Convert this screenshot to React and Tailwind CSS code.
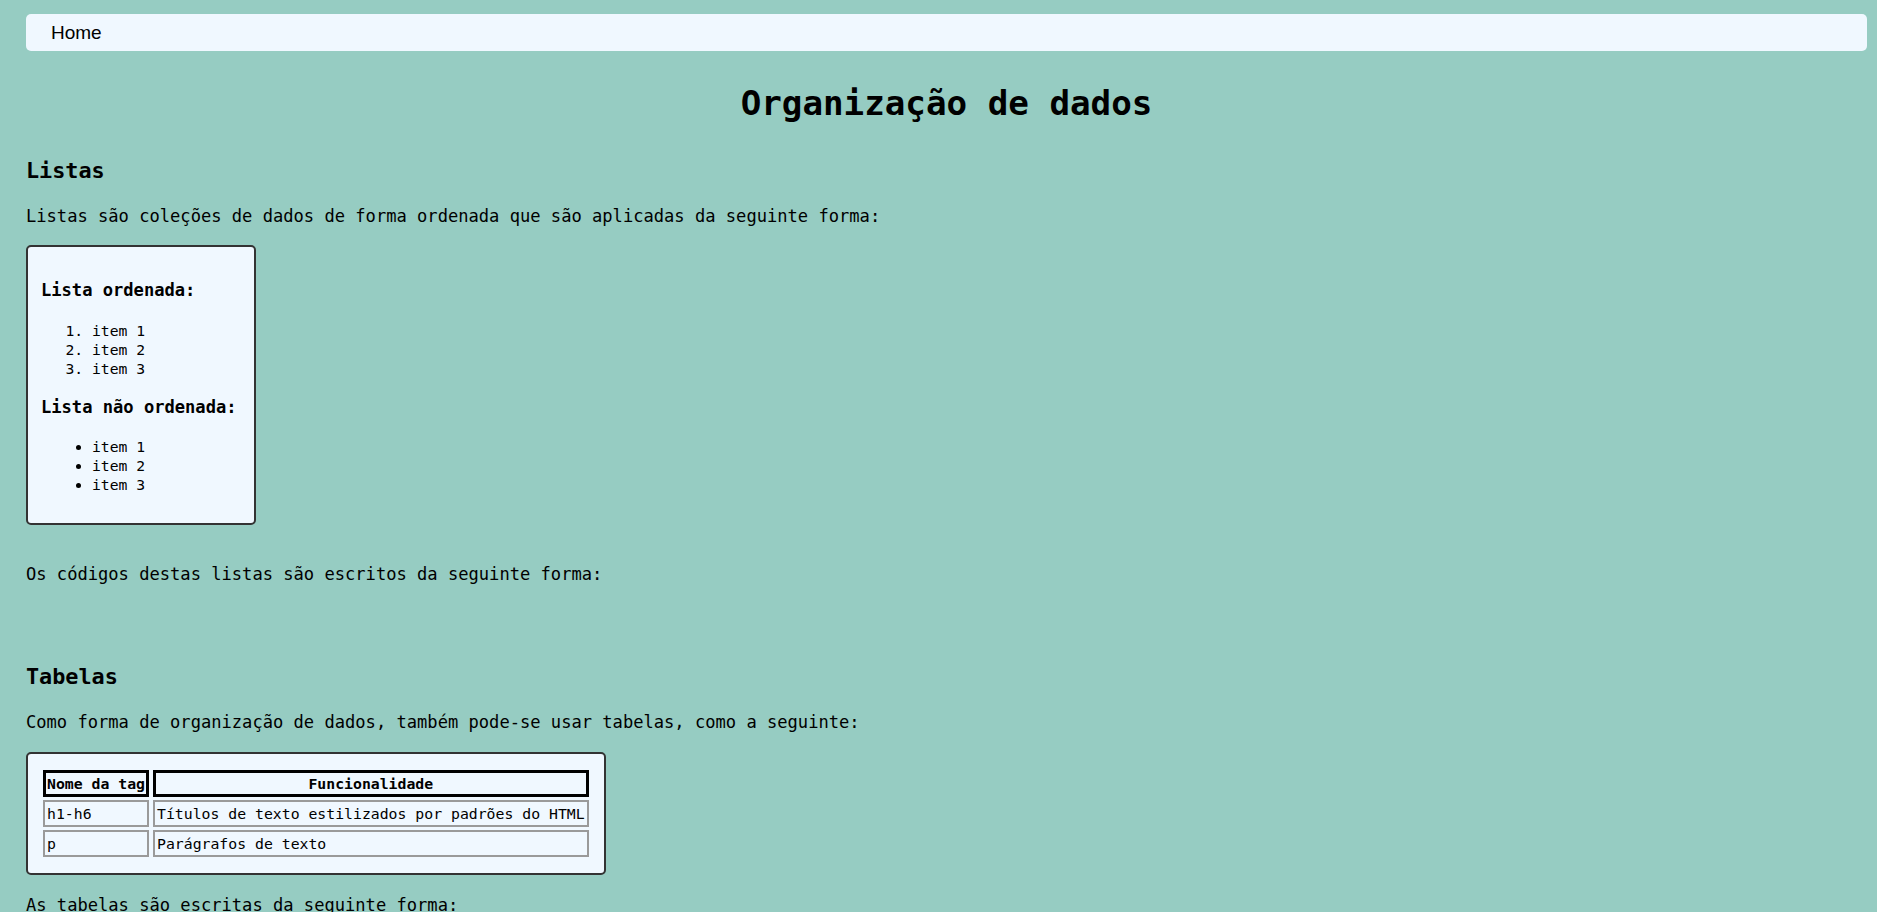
export default function App() {
  const body = "text-[17.1px] leading-[20px]";
  const th = "h-[27px] border-[3px] border-black px-[1px] py-0 font-bold whitespace-nowrap leading-[19px]";
  const td = "h-[27px] border-2 border-[#9a9a9a] px-[2px] py-0 whitespace-nowrap leading-[19px]";
  return (
    <div className="min-h-[912px] bg-[#96ccc2] pt-[14px] font-['DejaVu_Sans_Mono',monospace] text-black">
      <div className="ml-[26px] w-[1841px]">
        <nav className="h-[37px] rounded-[5px] bg-[#f0f8ff] pl-[25px] font-['Liberation_Sans',Arial,sans-serif] text-[19px] leading-[37px]">
          Home
        </nav>

        <h1 className="mt-[32px] text-center text-[34.2px] font-bold leading-[40px]">
          Organização de dados
        </h1>

        <h2 className="mt-[35px] text-[21.8px] font-bold leading-[26px]">Listas</h2>
        <p className={`mt-[22px] ${body}`}>
          Listas são coleções de dados de forma ordenada que são aplicadas da seguinte forma:
        </p>

        <div className="mt-[19px] h-[280px] w-[230px] rounded-[5px] border-2 border-[#333] bg-[#f0f8ff] pl-[13px] pt-[33px]">
          <h4 className={`${body} font-bold`}>Lista ordenada:</h4>
          <ol className="mt-[20.6px] list-decimal pl-[51px] text-[14.7px] leading-[19px]">
            <li>item 1</li>
            <li>item 2</li>
            <li>item 3</li>
          </ol>
          <h4 className={`mt-[19px] ${body} font-bold`}>Lista não ordenada:</h4>
          <ul className="mt-[20.7px] list-disc pl-[51px] text-[14.7px] leading-[19px]">
            <li>item 1</li>
            <li>item 2</li>
            <li>item 3</li>
          </ul>
        </div>

        <p className={`mt-[39px] ${body}`}>Os códigos destas listas são escritos da seguinte forma:</p>

        <h2 className="mt-[80px] text-[21.8px] font-bold leading-[26px]">Tabelas</h2>
        <p className={`mt-[22px] ${body}`}>
          Como forma de organização de dados, também pode-se usar tabelas, como a seguinte:
        </p>

        <div className="mt-[20px] w-fit rounded-[5px] border-2 border-[#333] bg-[#f0f8ff] px-[11px] pt-[13px] pb-[13px]">
          <table className="border-separate border-spacing-x-[4px] border-spacing-y-[3px] text-[14.8px] leading-[19px]">
            <thead>
              <tr className="h-[27px]">
                <th className={`${th} text-left`}>Nome da tag</th>
                <th className={`${th} text-center`}>Funcionalidade</th>
              </tr>
            </thead>
            <tbody>
              <tr className="h-[27px]">
                <td className={td}>h1-h6</td>
                <td className={td}>Títulos de texto estilizados por padrões do HTML</td>
              </tr>
              <tr className="h-[27px]">
                <td className={td}>p</td>
                <td className={td}>Parágrafos de texto</td>
              </tr>
            </tbody>
          </table>
        </div>

        <p className={`mt-[20px] ${body}`}>As tabelas são escritas da seguinte forma:</p>
      </div>
    </div>
  );
}
